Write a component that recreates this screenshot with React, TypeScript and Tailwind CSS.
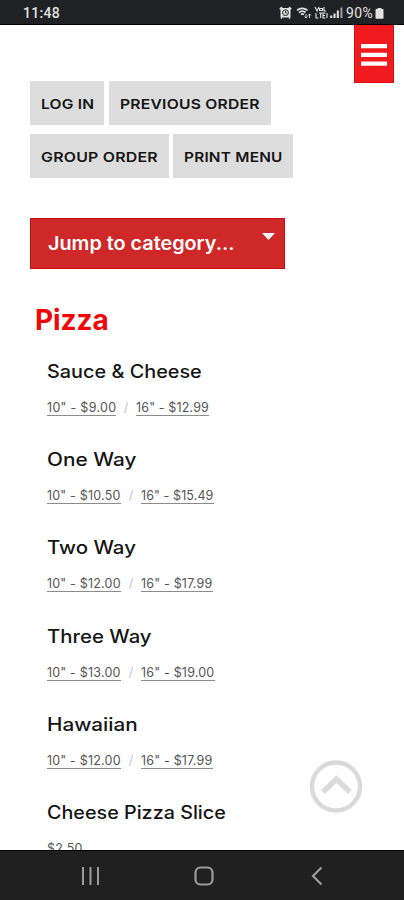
import type { ReactNode } from "react";

type Price = { label: string; fit: string };
type MenuItem = { name: string; fit: string; prices: Price[] };

// Inter is narrower than the brand type, so each string is widened a little to its own measure.
const ITEMS: MenuItem[] = [
  {
    name: "Sauce & Cheese",
    fit: "scale-x-[1.102]",
    prices: [
      { label: '10" - $9.00', fit: "w-[69px] tracking-[0.3px]" },
      { label: '16" - $12.99', fit: "w-[73px] tracking-[0.15px]" },
    ],
  },
  {
    name: "One Way",
    fit: "scale-x-[1.155]",
    prices: [
      { label: '10" - $10.50', fit: "w-[74px] tracking-[0.2px]" },
      { label: '16" - $15.49', fit: "w-[73px] tracking-[0.1px]" },
    ],
  },
  {
    name: "Two Way",
    fit: "scale-x-[1.135]",
    prices: [
      { label: '10" - $12.00', fit: "w-[74px] tracking-[0.2px]" },
      { label: '16" - $17.99', fit: "w-[72px] tracking-[0.2px]" },
    ],
  },
  {
    name: "Three Way",
    fit: "scale-x-[1.13]",
    prices: [
      { label: '10" - $13.00', fit: "w-[74px] tracking-[0.2px]" },
      { label: '16" - $19.00', fit: "w-[74px] tracking-[0.2px]" },
    ],
  },
  {
    name: "Hawaiian",
    fit: "scale-x-[1.15]",
    prices: [
      { label: '10" - $12.00', fit: "w-[74px] tracking-[0.2px]" },
      { label: '16" - $17.99', fit: "w-[72px] tracking-[0.2px]" },
    ],
  },
  {
    name: "Cheese Pizza Slice",
    fit: "scale-x-[1.096]",
    prices: [{ label: "$2.50", fit: "w-[36px] tracking-[0.2px]" }],
  },
];

function StatusBar() {
  return (
    <div className="flex h-[25px] flex-shrink-0 items-center justify-between border-b border-black bg-[#202124] pl-[23px] pr-[20px] text-[#e2e2e2]">
      <span className="pt-[2px] font-['Roboto'] text-[14px] font-medium leading-none tracking-[0.3px]">11:48</span>
      <div className="flex items-center pt-[2px]">
        <svg width="67" height="14" viewBox="0 0 67 14" fill="none" stroke="currentColor" aria-hidden>
          {/* alarm */}
          <path d="M1.500 2h10v9.500h-10z" fill="currentColor" stroke="none" />
          <path d="M.8 3.200 3 1M12.200 3.200 10 1M2 12.500l1-1M11 12.500l-1-1" strokeWidth="1.6" />
          <circle cx="6.500" cy="6.700" r="2.900" stroke="#202124" strokeWidth="1" />
          <path d="M6.500 5v2h1.500" stroke="#202124" strokeWidth="0.9" />
          {/* wifi */}
          <path d="M18 4.300q5-4 10.500 0M20 6.500q3.300-2.700 6.500 0M22 8.500q1.600-1.200 3 0" strokeWidth="1.7" />
          <path d="m27 8 0 4M25.500 10.500 27 12l1.500-1.500M30.500 12V8M29 9.500 30.500 8 32 9.500" strokeWidth="0.9" />
          {/* VoLTE */}
          <path d="m36 1 2 4 2-4M40.500 2.500h3v2h-3zM45 1v4h2M37 7v5h2.500M40 7h3.500M41.700 7v5M46.500 7H44v5h2.500M44 9.500h2M48 12V7" strokeWidth="1.1" />
          {/* signal */}
          <path d="M52.200 12V9.500M55.500 12V7.500M58.800 12V4.500" strokeWidth="2.1" />
          <path d="M62.400 12V1.500" strokeWidth="2" opacity=".65" />
        </svg>
        <span className="font-['Roboto'] text-[14px] leading-none tracking-[0.3px]">90%</span>
        <svg className="ml-[2px]" width="9" height="12" viewBox="0 0 9 12" fill="currentColor" aria-hidden>
          <path d="M2.500 1h4v1H8q.5 0 .5.5V11q0 .7-.7.7H1.200Q.5 11.700.5 11V2.500Q.5 2 1 2h1.500z" />
        </svg>
      </div>
    </div>
  );
}

function ActionButton({ className, fit, children }: { className: string; fit: string; children: ReactNode }) {
  return (
    <button className={`flex h-[44px] items-center bg-[#dddddd] pl-[11px] pt-[2px] ${className}`}>
      <span
        className={`origin-left whitespace-nowrap text-[13.5px] font-semibold tracking-[0.2px] text-[#141414] ${fit}`}
      >
        {children}
      </span>
    </button>
  );
}

function MenuRow({ item }: { item: MenuItem }) {
  return (
    <li className="h-[88.2px]">
      <h3
        className={`w-max origin-left whitespace-nowrap text-[18px] font-medium leading-[24px] text-[#151515] ${item.fit}`}
      >
        {item.name}
      </h3>
      <p className="mt-[16px] flex text-[12.5px] leading-[16px] text-[#555]">
        {item.prices.map((price, i) => (
          <span key={price.label} className="flex">
            {i > 0 && <span className="w-[20px] text-center text-[#c4c4c4]">/</span>}
            <a className={`h-[16px] whitespace-nowrap border-b border-[#8c8c8c] ${price.fit}`}>{price.label}</a>
          </span>
        ))}
      </p>
    </li>
  );
}

function NavBar() {
  return (
    <nav className="flex h-[50px] flex-shrink-0 items-center justify-between border-t border-black bg-[#202020] pl-[79px] pr-[76px]">
      <svg width="22" height="20" viewBox="0 0 22 20" stroke="#9b9b9b" strokeWidth="2" aria-hidden>
        <path d="M4 1v18M11.500 1v18M19 1v18" />
      </svg>
      <svg width="20" height="20" viewBox="0 0 20 20" fill="none" stroke="#9b9b9b" strokeWidth="2.2" aria-hidden>
        <rect x="1.500" y="1.500" width="17" height="17" rx="5" />
      </svg>
      <svg width="22" height="20" viewBox="0 0 22 20" fill="none" stroke="#9b9b9b" strokeWidth="2.2" aria-hidden>
        <path d="M15.500 1.500 7 10l8.500 8.500" />
      </svg>
    </nav>
  );
}

export default function App() {
  return (
    <div className="relative flex h-[900px] w-[404px] flex-col overflow-hidden bg-white font-['Inter',sans-serif]">
      <StatusBar />

      <main className="min-h-0 flex-1 overflow-hidden">
        <div className="flex h-[57px] justify-end pr-[10px]">
          <button
            className="flex h-[58px] w-[40px] items-start justify-center border-x border-b border-[#dc0c10] bg-[#f11a1e] pt-[19px]"
            aria-label="Menu"
          >
            <svg width="26" height="22" viewBox="0 0 26 22" fill="#fff" aria-hidden>
              <path d="M0 0h26v4.300H0zM0 8.700h26V13H0zM0 17.400h26v4.300H0z" />
            </svg>
          </button>
        </div>

        <div className="-mt-px ml-[30px] flex flex-col gap-[9px]">
          <div className="flex gap-[5px]">
            <ActionButton className="w-[74px]" fit="scale-x-[1.15]">LOG IN</ActionButton>
            <ActionButton className="w-[162px]" fit="scale-x-[1.16]">PREVIOUS ORDER</ActionButton>
          </div>
          <div className="flex gap-[4px]">
            <ActionButton className="w-[139px]" fit="scale-x-[1.176]">GROUP ORDER</ActionButton>
            <ActionButton className="w-[120px]" fit="scale-x-[1.138]">PRINT MENU</ActionButton>
          </div>
        </div>

        <button className="ml-[30px] mt-[40px] flex h-[51px] w-[255px] justify-between border border-[#c80c10] bg-[#cf2828] pl-[17px] pr-[9px] text-white">
          <span className="origin-left scale-x-[1.07] self-center whitespace-nowrap text-[18.5px] font-semibold">
            Jump to category...
          </span>
          <svg className="mt-[14px]" width="13" height="7" viewBox="0 0 13 7" fill="currentColor" aria-hidden>
            <path d="M0 0h13L6.500 7z" />
          </svg>
        </button>

        <h2 className="ml-[35px] mt-[34px] text-[28px] font-bold leading-[34px] tracking-[-0.1px] text-[#f00808]">Pizza</h2>

        <ul className="ml-[47px] mt-[23px]">
          {ITEMS.map((item) => (
            <MenuRow key={item.name} item={item} />
          ))}
        </ul>
      </main>

      <button className="absolute left-[309px] top-[760px]" aria-label="Back to top">
        <svg width="54" height="54" viewBox="0 0 54 54" fill="none" stroke="#dadada" aria-hidden>
          <circle cx="27" cy="26.500" r="24" strokeWidth="4.500" />
          <path d="M14 32 27.500 19 41 32" strokeWidth="5.500" />
        </svg>
      </button>

      <NavBar />
    </div>
  );
}
